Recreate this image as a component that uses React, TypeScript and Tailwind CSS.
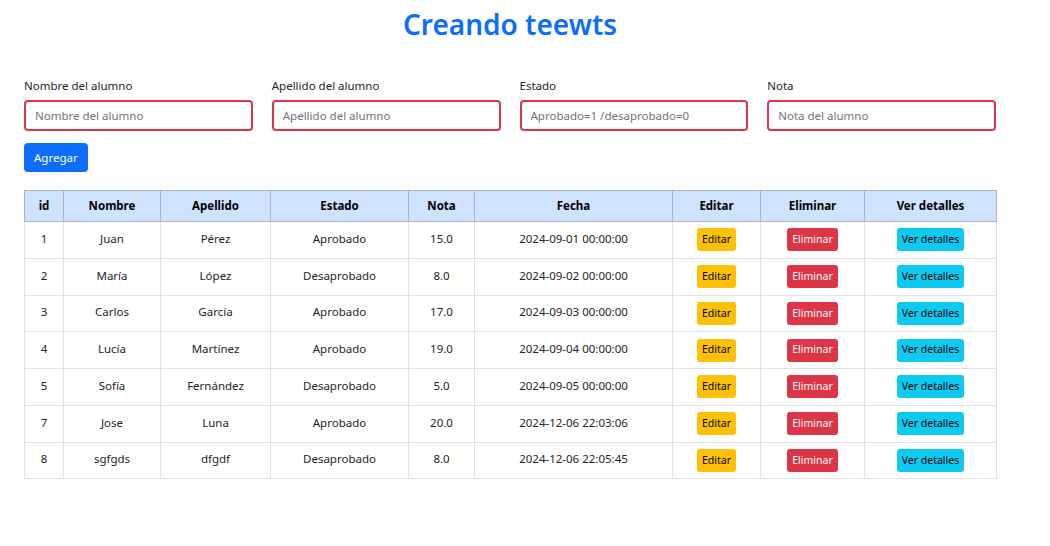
import React from "react";

interface Alumno {
  id: number;
  nombre: string;
  apellido: string;
  estado: string;
  nota: string;
  fecha: string;
}

const alumnos: Alumno[] = [
  { id: 1, nombre: "Juan", apellido: "Pérez", estado: "Aprobado", nota: "15.0", fecha: "2024-09-01 00:00:00" },
  { id: 2, nombre: "María", apellido: "López", estado: "Desaprobado", nota: "8.0", fecha: "2024-09-02 00:00:00" },
  { id: 3, nombre: "Carlos", apellido: "García", estado: "Aprobado", nota: "17.0", fecha: "2024-09-03 00:00:00" },
  { id: 4, nombre: "Lucía", apellido: "Martínez", estado: "Aprobado", nota: "19.0", fecha: "2024-09-04 00:00:00" },
  { id: 5, nombre: "Sofía", apellido: "Fernández", estado: "Desaprobado", nota: "5.0", fecha: "2024-09-05 00:00:00" },
  { id: 7, nombre: "Jose", apellido: "Luna", estado: "Aprobado", nota: "20.0", fecha: "2024-12-06 22:03:06" },
  { id: 8, nombre: "sgfgds", apellido: "dfgdf", estado: "Desaprobado", nota: "8.0", fecha: "2024-12-06 22:05:45" },
];

const campos = [
  { label: "Nombre del alumno", placeholder: "Nombre del alumno" },
  { label: "Apellido del alumno", placeholder: "Apellido del alumno" },
  { label: "Estado", placeholder: "Aprobado=1 /desaprobado=0" },
  { label: "Nota", placeholder: "Nota del alumno" },
];

const headers = ["id", "Nombre", "Apellido", "Estado", "Nota", "Fecha", "Editar", "Eliminar", "Ver detalles"];
const widths = [39, 97, 110, 138, 66, 198, 88, 104, 132];

const App: React.FC = () => {
  return (
    <div className="min-h-screen bg-white font-['Noto_Sans',sans-serif] text-[#212529]">
      <div className="ml-6 w-[972px] pt-[4px]">
        <h1 className="text-center text-[28px] font-semibold leading-[40px] text-[#0d6efd]">
          Creando teewts
        </h1>

        <div className="mt-[33px] grid grid-cols-4 gap-x-[19px]">
          {campos.map((c) => (
            <div key={c.label} className="flex flex-col">
              <label className="text-[11.5px] leading-[18px]">{c.label}</label>
              <input
                placeholder={c.placeholder}
                className="mt-[5px] h-[31px] rounded-[4px] border-2 border-[#dc3545] px-[9px] text-[11.5px] outline-none placeholder:text-[#6c757d]"
              />
            </div>
          ))}
        </div>

        <button className="mt-[12px] h-[29px] rounded-[4px] bg-[#0d6efd] px-[10px] text-[11.5px] text-white">
          Agregar
        </button>

        <table className="mt-[18px] w-[972px] table-fixed border-collapse text-center text-[11.5px]">
          <colgroup>
            {widths.map((w, i) => (
              <col key={i} style={{ width: w }} />
            ))}
          </colgroup>
          <thead>
            <tr className="h-[31px] bg-[#cfe2ff]">
              {headers.map((h) => (
                <th key={h} className="border border-[#a6b5cc] font-bold text-black">
                  {h}
                </th>
              ))}
            </tr>
          </thead>
          <tbody>
            {alumnos.map((a) => (
              <tr key={a.id} className="h-[36.75px]">
                <td className="border border-[#dee2e6] pb-[3px]">{a.id}</td>
                <td className="border border-[#dee2e6] pb-[3px]">{a.nombre}</td>
                <td className="border border-[#dee2e6] pb-[3px]">{a.apellido}</td>
                <td className="border border-[#dee2e6] pb-[3px]">{a.estado}</td>
                <td className="border border-[#dee2e6] pb-[3px]">{a.nota}</td>
                <td className="border border-[#dee2e6] pb-[3px]">{a.fecha}</td>
                <td className="border border-[#dee2e6]">
                  <button className="h-[23px] rounded-[3px] bg-[#ffc107] px-[5px] text-[10.5px] text-black">Editar</button>
                </td>
                <td className="border border-[#dee2e6]">
                  <button className="h-[23px] rounded-[3px] bg-[#dc3545] px-[5px] text-[10.5px] text-white">Eliminar</button>
                </td>
                <td className="border border-[#dee2e6]">
                  <button className="h-[23px] rounded-[3px] bg-[#0dcaf0] px-[5px] text-[10.5px] text-black">Ver detalles</button>
                </td>
              </tr>
            ))}
          </tbody>
        </table>
      </div>
    </div>
  );
};

export default App;
